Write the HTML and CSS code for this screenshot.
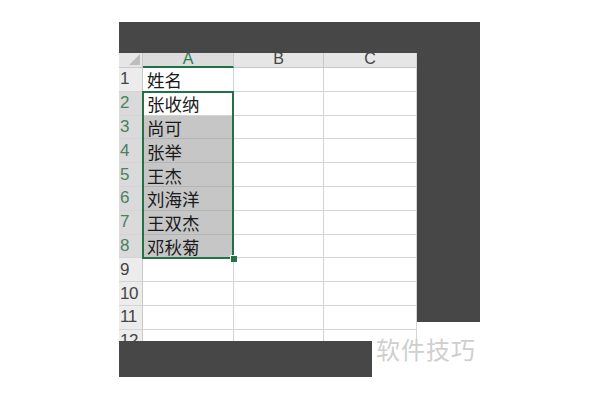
FILE: index.html
```html
<!DOCTYPE html>
<html lang="zh">
<head>
<meta charset="utf-8">
<title>软件技巧</title>
<link rel="stylesheet" href="styles.css">
</head>
<body>
<div class="stage">
  <div class="shade shade-top"></div>
  <div class="sheet">
    <div class="corner"><span class="tri"></span></div>
    <div class="colhead active">A</div>
    <div class="colhead">B</div>
    <div class="colhead last">C</div>

    <div class="rowhead">1</div><div class="cell">姓名</div><div class="cell"></div><div class="cell last"></div>
    <div class="rowhead sel">2</div><div class="cell">张收纳</div><div class="cell"></div><div class="cell last"></div>
    <div class="rowhead sel">3</div><div class="cell fill">尚可</div><div class="cell"></div><div class="cell last"></div>
    <div class="rowhead sel">4</div><div class="cell fill">张举</div><div class="cell"></div><div class="cell last"></div>
    <div class="rowhead sel">5</div><div class="cell fill">王杰</div><div class="cell"></div><div class="cell last"></div>
    <div class="rowhead sel">6</div><div class="cell fill">刘海洋</div><div class="cell"></div><div class="cell last"></div>
    <div class="rowhead sel">7</div><div class="cell fill">王双杰</div><div class="cell"></div><div class="cell last"></div>
    <div class="rowhead sel">8</div><div class="cell fill">邓秋菊</div><div class="cell"></div><div class="cell last"></div>
    <div class="rowhead">9</div><div class="cell"></div><div class="cell"></div><div class="cell last"></div>
    <div class="rowhead">10</div><div class="cell"></div><div class="cell"></div><div class="cell last"></div>
    <div class="rowhead">11</div><div class="cell"></div><div class="cell"></div><div class="cell last"></div>
    <div class="rowhead">12</div><div class="cell"></div><div class="cell"></div><div class="cell last"></div>

    <div class="selection"><span class="handle"></span></div>
  </div>
  <div class="shade shade-right"></div>
  <div class="shade shade-bottom"></div>
  <div class="watermark">软件技巧</div>
</div>
</body>
</html>
```

FILE: styles.css
```css
html, body {
  margin: 0;
  padding: 0;
  background: #ffffff;
}

.stage {
  display: grid;
  grid-template-columns: 253px 45px 63px;
  grid-template-rows: 31px 269px 19px 36px;
  width: 361px;
  margin: 22px 0 0 119px;
}

.shade {
  background: #474747;
}

.shade-top {
  grid-column: 1 / 4;
  grid-row: 1;
}

.shade-right {
  grid-column: 3;
  grid-row: 2;
}

.shade-bottom {
  grid-column: 1;
  grid-row: 4;
}

.sheet {
  grid-column: 1 / 3;
  grid-row: 2 / 4;
  display: grid;
  grid-template-columns: 24px 91px 90px 93px;
  grid-template-rows: 15px repeat(12, 23.8px);
  height: 288px;
  overflow: hidden;
  background: #ffffff;
  position: relative;
}

.corner {
  background: #e6e6e6;
  border-right: 1px solid #c9c9c9;
  border-bottom: 1px solid #c9c9c9;
  box-sizing: border-box;
  display: flex;
  align-items: flex-end;
  justify-content: flex-end;
  padding: 0 2px 2px 0;
}

.tri {
  width: 0;
  height: 0;
  border-left: 11px solid transparent;
  border-bottom: 11px solid #bdbdbd;
}

.colhead {
  background: #e6e6e6;
  border-right: 1px solid #c9c9c9;
  border-bottom: 1px solid #c9c9c9;
  box-sizing: border-box;
  display: flex;
  align-items: flex-end;
  justify-content: center;
  font-family: "Liberation Sans", Arial, sans-serif;
  font-size: 16px;
  line-height: 14px;
  color: #444444;
  padding-bottom: 1px;
}

.colhead.active {
  background: #dcdcdc;
  color: #2e7a50;
  border-bottom: 2px solid #217346;
  padding-bottom: 0;
}

.colhead.last {
  border-right-color: #d4d4d4;
}

.rowhead {
  background: #ececec;
  border-right: 1px solid #c9c9c9;
  border-bottom: 1px solid #d4d4d4;
  box-sizing: border-box;
  display: flex;
  align-items: center;
  padding-left: 1px;
  overflow: hidden;
  font-family: "Liberation Sans", Arial, sans-serif;
  font-size: 17px;
  color: #444444;
  letter-spacing: -0.5px;
}

.rowhead.sel {
  background: #dadada;
  color: #4b8062;
}

.cell {
  border-right: 1px solid #d4d4d4;
  border-bottom: 1px solid #d4d4d4;
  box-sizing: border-box;
  display: flex;
  align-items: center;
  padding: 1px 0 0 4px;
  overflow: hidden;
  white-space: nowrap;
  font-family: "Noto Sans CJK SC", "Noto Sans", sans-serif;
  font-size: 17.5px;
  color: #1a1a1a;
}

.cell.fill {
  background: #c6c6c6;
  border-bottom-color: #b4b4b4;
}

.selection {
  position: absolute;
  grid-column: 2 / 3;
  grid-row: 3 / 10;
  top: -1px;
  bottom: -1px;
  left: -1px;
  right: 0;
  border: 2px solid #217346;
  pointer-events: none;
}

.handle {
  position: absolute;
  right: -5px;
  bottom: -5px;
  width: 6px;
  height: 6px;
  background: #217346;
  border: 1px solid #ffffff;
  border-right: none;
  border-bottom: none;
}

.watermark {
  grid-column: 2 / 4;
  grid-row: 3 / 5;
  align-self: start;
  margin: 13px 0 0 4px;
  font-family: "Noto Sans CJK SC", sans-serif;
  font-size: 24px;
  line-height: 28px;
  letter-spacing: 1px;
  color: #cfcfcf;
  white-space: nowrap;
  z-index: 2;
}
```
